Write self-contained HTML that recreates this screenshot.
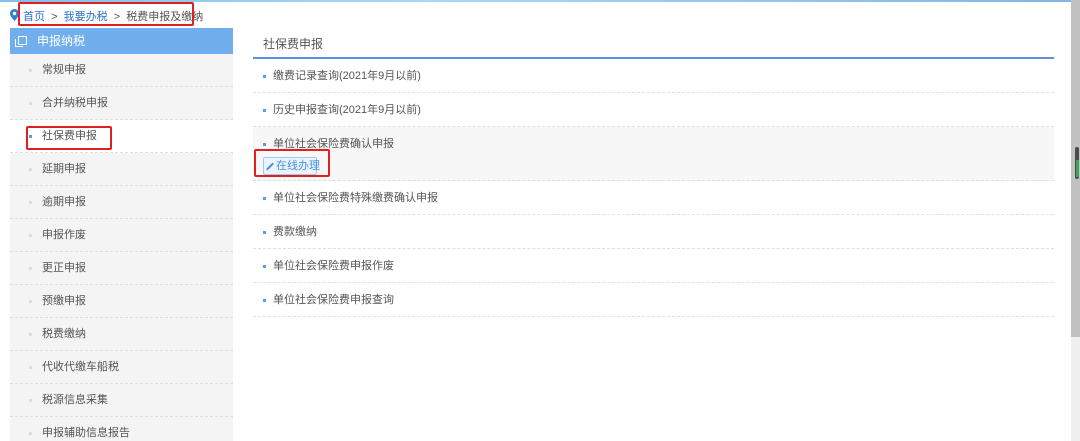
<!DOCTYPE html>
<html><head><meta charset="utf-8"><style>
*{margin:0;padding:0;box-sizing:border-box}
body{width:1080px;height:441px;overflow:hidden;background:#fff;font-family:"Liberation Sans","Noto Sans CJK SC",sans-serif;font-size:11px;color:#555;position:relative}
.top{position:absolute;left:0;top:0;width:1071px;height:2px;background:linear-gradient(90deg,#7fc1ec,#a8d8f4 40%,#7fb6e8)}
.red{position:absolute;border:2px solid #e02020;border-radius:2px}
.bc{position:absolute;top:8px;left:23px;font-size:11px;color:#555;white-space:nowrap}
.bc a{color:#2a6fc9}
.side{position:absolute;left:10px;top:28px;width:223px;height:413px;background:#f4f4f4;overflow:hidden}
.sh{height:26px;background:#70aeee;color:#fff;font-size:12px;line-height:26px;padding-left:27px;position:relative}
.sh i{position:absolute;left:8px;top:8px;width:9px;height:9px;border:1.3px solid #fff;border-radius:1px}
.sh i:before{content:"";position:absolute;left:-4px;top:2px;width:7px;height:7px;border-left:1.3px solid #fff;border-bottom:1.3px solid #fff}
.si{height:33px;line-height:33px;padding-left:32px;border-bottom:1px dashed #ddd;position:relative;color:#555}
.si:before{content:"";position:absolute;left:19px;top:15px;width:3px;height:3px;background:#ddd}
.si.act{background:#fff}
.si.act:before{background:#5b9be0}
.main{position:absolute;left:253px;top:28px;width:801px}
.mt{height:31px;line-height:32px;font-size:12px;padding-left:10px;color:#555;border-bottom:2px solid #5b92e0}
.mi{height:34px;line-height:35px;padding-left:20px;border-bottom:1px dashed #e0e0e0;position:relative;color:#555}
.mi:before{content:"";position:absolute;left:10px;top:16px;width:3px;height:3px;background:#5b9be0}
.mi.hl{height:54px;background:#f7f7f7;line-height:35px}
.btn{position:absolute;left:10px;top:30px;width:54px;height:18px;border:1px solid #9fc9ef;background:#eaf4fd;border-radius:2px;color:#4a90d9;font-size:11px;line-height:16px;padding-left:12px;white-space:nowrap}
.btn:before{content:"";position:absolute;left:5px;top:4px;width:2px;height:9px;background:#4a90d9;transform:rotate(45deg)}
.sb{position:absolute;left:1071px;top:0;width:9px;height:441px;background:#f0f0f0}
.sbt{position:absolute;left:1071px;top:0;width:9px;height:337px;background:#c1c1c1}
.th{position:absolute;left:1075px;top:147px;width:4px;height:32px;background:#4b4b4b;border-radius:2px}
.th2{position:absolute;left:1076px;top:160px;width:3px;height:17px;background:#3aa55a}
</style></head><body>
<div class="top"></div>
<svg style="position:absolute;left:10px;top:9px" width="9" height="12" viewBox="0 0 9 12"><path d="M4.5 0C2 0 0 2 0 4.5 0 7.5 4.5 12 4.5 12S9 7.5 9 4.5C9 2 7 0 4.5 0z" fill="#2a7fd9"/><circle cx="4.5" cy="4.5" r="1.7" fill="#fff"/></svg>
<div class="bc"><a>首页</a> &nbsp;&gt;&nbsp; <a>我要办税</a> &nbsp;&gt;&nbsp; 税费申报及缴纳</div>
<div class="red" style="left:18px;top:2px;width:176px;height:24px"></div>
<div class="side">
<div class="sh"><i></i>申报纳税</div>
<div class="si">常规申报</div>
<div class="si">合并纳税申报</div>
<div class="si act">社保费申报</div>
<div class="si">延期申报</div>
<div class="si">逾期申报</div>
<div class="si">申报作废</div>
<div class="si">更正申报</div>
<div class="si">预缴申报</div>
<div class="si">税费缴纳</div>
<div class="si">代收代缴车船税</div>
<div class="si">税源信息采集</div>
<div class="si">申报辅助信息报告</div>
</div>
<div class="red" style="left:26px;top:126px;width:86px;height:24px"></div>
<div class="main">
<div class="mt">社保费申报</div>
<div class="mi">缴费记录查询(2021年9月以前)</div>
<div class="mi">历史申报查询(2021年9月以前)</div>
<div class="mi hl">单位社会保险费确认申报<div class="btn">在线办理</div></div>
<div class="mi">单位社会保险费特殊缴费确认申报</div>
<div class="mi">费款缴纳</div>
<div class="mi">单位社会保险费申报作废</div>
<div class="mi">单位社会保险费申报查询</div>
</div>
<div class="red" style="left:254px;top:149px;width:76px;height:28px"></div>
<div class="sb"></div><div class="sbt"></div><div class="th"></div><div class="th2"></div>
</body></html>
